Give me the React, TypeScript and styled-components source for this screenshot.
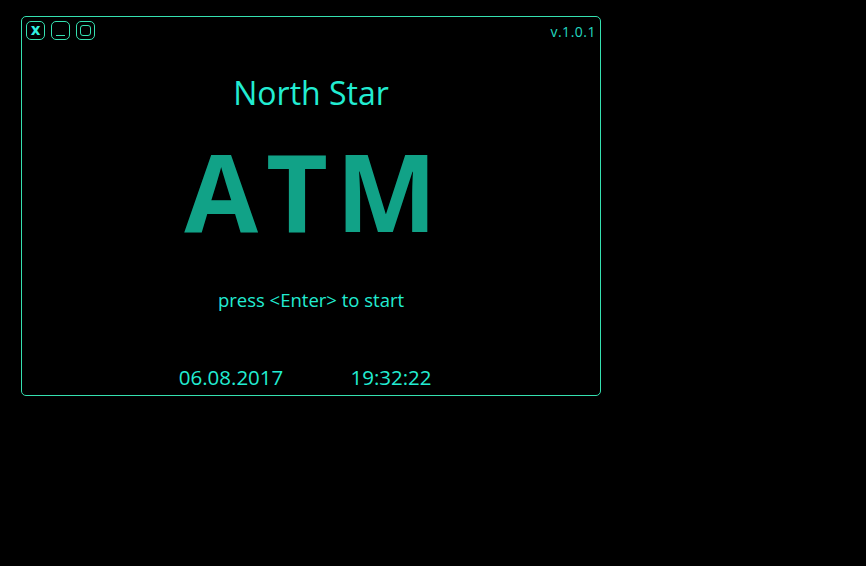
import React from 'react';
import styled, { createGlobalStyle } from 'styled-components';

const GlobalStyle = createGlobalStyle`
    html, body {
        margin: 0;
        padding: 0;
        background: #000;
        height: 100%;
    }
    body {
        font-family: "Open Sans", "DejaVu Sans", sans-serif;
    }
`;

const Screen = styled.div`
    padding: 16px 0 0 21px;
    width: 866px;
    height: 566px;
    box-sizing: border-box;
    background: #000;
`;

const Window = styled.div`
    width: 580px;
    height: 380px;
    box-sizing: border-box;
    border: 1px solid #35e0b0;
    border-radius: 5px;
    display: flex;
    flex-direction: column;
    align-items: center;
    color: #22ecd2;
`;

const TitleBar = styled.div`
    align-self: stretch;
    display: flex;
    justify-content: space-between;
    align-items: flex-start;
    padding: 4px 4px 0 4px;
`;

const Controls = styled.div`
    display: flex;
    gap: 6px;
`;

const ControlButton = styled.div`
    width: 19px;
    height: 19px;
    box-sizing: border-box;
    border: 1px solid #35e0b0;
    border-radius: 5px;
    display: flex;
    align-items: center;
    justify-content: center;
    color: #30f0e0;
    font-family: "DejaVu Sans", sans-serif;
    font-weight: bold;
    font-size: 15px;
    line-height: 1;
`;

const Underscore = styled.span`
    width: 9px;
    height: 1px;
    margin-top: 10px;
    background: #35e0b0;
`;

const InnerBox = styled.span`
    width: 11px;
    height: 11px;
    box-sizing: border-box;
    border: 1px solid #35e0b0;
    border-radius: 3px;
`;

const Version = styled.div`
    font-size: 14px;
    letter-spacing: 0.5px;
    margin-top: 1px;
    color: #22d8c0;
`;

const Title = styled.div`
    margin-top: 32px;
    font-size: 32px;
    line-height: 40px;
`;

const Logo = styled.div`
    margin-top: 18px;
    padding-left: 7px;
    font-family: "Open Sans", sans-serif;
    font-weight: 700;
    font-size: 107px;
    line-height: 120px;
    letter-spacing: 8px;
    color: #11a287;
`;

const Prompt = styled.div`
    margin-top: 37px;
    font-size: 18.5px;
    line-height: 24px;
`;

const Footer = styled.div`
    margin-top: 52px;
    display: flex;
`;

const FooterCell = styled.div`
    width: 160px;
    text-align: center;
    font-size: 20.5px;
    line-height: 26px;
`;

const App = () => {
    return (
        <Screen>
            <GlobalStyle />
            <Window>
                <TitleBar>
                    <Controls>
                        <ControlButton>x</ControlButton>
                        <ControlButton><Underscore /></ControlButton>
                        <ControlButton><InnerBox /></ControlButton>
                    </Controls>
                    <Version>v.1.0.1</Version>
                </TitleBar>
                <Title>North Star</Title>
                <Logo>ATM</Logo>
                <Prompt>press &lt;Enter&gt; to start</Prompt>
                <Footer>
                    <FooterCell>06.08.2017</FooterCell>
                    <FooterCell>19:32:22</FooterCell>
                </Footer>
            </Window>
        </Screen>
    );
};

export default App;
